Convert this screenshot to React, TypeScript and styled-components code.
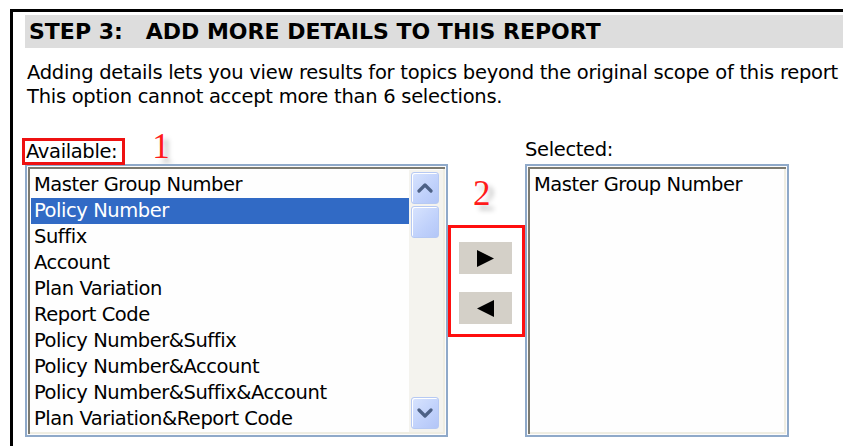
import styled, { createGlobalStyle } from "styled-components";

const GlobalStyle = createGlobalStyle`
  html, body {
    margin: 0;
    padding: 0;
    background: #ffffff;
  }
  body {
    font-family: "DejaVu Sans", "Liberation Sans", sans-serif;
    color: #000000;
    overflow: hidden;
  }
`;

const available = [
  "Master Group Number",
  "Policy Number",
  "Suffix",
  "Account",
  "Plan Variation",
  "Report Code",
  "Policy Number&Suffix",
  "Policy Number&Account",
  "Policy Number&Suffix&Account",
  "Plan Variation&Report Code",
];

const selected = ["Master Group Number"];

const Frame = styled.div`
  margin: 9px 0 0 10px;
  height: 437px;
  border-top: 3px solid #000;
  border-left: 3px solid #000;
  padding: 3px 0 0 12px;
  box-sizing: border-box;
`;

const Header = styled.div`
  height: 33px;
  background: #dddddd;
  padding-left: 4px;
  display: flex;
  align-items: center;
  font-weight: bold;
  font-size: 22px;
  letter-spacing: 0;
  white-space: pre;
`;

const Intro = styled.p`
  margin: 13px 0 0 2px;
  font-size: 19.5px;
  line-height: 24px;
  letter-spacing: -0.27px;
  white-space: nowrap;
`;

const Picker = styled.div`
  display: grid;
  grid-template-columns: 423px 77px 264px;
  margin-top: 23px;
`;

const Column = styled.div`
  display: flex;
  flex-direction: column;
`;

const LabelRow = styled.div`
  height: 32px;
  display: flex;
  align-items: flex-end;
`;

const Label = styled.span<{ $boxed?: boolean }>`
  font-size: 19.5px;
  letter-spacing: -0.35px;
  line-height: 21px;
  box-sizing: border-box;
  ${(p) =>
    p.$boxed
      ? `
    height: 27px;
    border: 3px solid #ee1111;
    padding: 0 5px 0 1px;
    margin: 0 0 -1px -3px;
    position: relative;
    z-index: 1;
  `
      : `
    padding: 0 0 4px 0;
  `}
`;

const Callout = styled.span`
  font-family: "Liberation Serif", "DejaVu Serif", serif;
  font-size: 35px;
  line-height: 1;
  color: #ff1a1a;
  text-shadow: 5px 5px 5px rgba(0, 0, 0, 0.25);
`;

const StepOne = styled(Callout)`
  align-self: flex-start;
  margin: -3px 0 0 27px;
`;

const StepTwo = styled(Callout)`
  margin: 44px 0 0 25px;
  height: 49px;
`;

const ListBox = styled.div`
  height: 273px;
  box-sizing: border-box;
  border: 2px solid #8fa9c9;
  padding: 4px 3px 3px 4px;
  background: #fefefe;
  box-shadow: inset 0 0 0 1px #fcfcfc, inset 3px 3px 0 #7c7a70,
    inset -3px -3px 0 #efede2;
  display: flex;
`;

const Items = styled.ul`
  flex: 1;
  margin: 2px 0 0;
  padding: 0;
  list-style: none;
`;

const Item = styled.li<{ $active?: boolean }>`
  height: 26px;
  line-height: 26px;
  padding-left: 3px;
  font-size: 19.5px;
  letter-spacing: -0.45px;
  white-space: nowrap;
  background: ${(p) => (p.$active ? "#316ac5" : "transparent")};
  color: ${(p) => (p.$active ? "#ffffff" : "#000000")};
`;

const ScrollBar = styled.div`
  width: 34px;
  background: #f4f3ee;
  display: flex;
  flex-direction: column;
  padding: 2px 4px 3px 2px;
  box-sizing: border-box;
  gap: 2px;
`;

const ScrollPart = styled.div`
  height: 32px;
  border: 1px solid #b6c9f3;
  border-radius: 3px;
  background: linear-gradient(135deg, #d8e4fe 0%, #c0d1fb 60%, #b3c6f7 100%);
  box-shadow: inset 1px 1px 0 #ffffff;
  display: flex;
  align-items: center;
  justify-content: center;
  box-sizing: border-box;
`;

const Track = styled.div`
  flex: 1;
`;

const MoveColumn = styled.div`
  display: flex;
  flex-direction: column;
`;

const MoveGroup = styled.div`
  width: 77px;
  height: 112px;
  box-sizing: border-box;
  border: 3px solid #ff0f0f;
  padding: 14px 0 0 8px;
  display: flex;
  flex-direction: column;
  gap: 18px;
  background: #ffffff;
  position: relative;
  z-index: 1;
`;

const MoveButton = styled.button`
  width: 53px;
  height: 32px;
  border: none;
  padding: 0;
  background: #d4d0c8;
  display: flex;
  align-items: center;
  justify-content: center;
`;

const SelectedPad = styled(Items)`
  margin-top: 2px;
`;

const Chevron = ({ up }: { up?: boolean }) => (
  <svg width="16" height="10" viewBox="0 0 16 10">
    <path
      d={up ? "M2 8 L8 2 L14 8" : "M2 2 L8 8 L14 2"}
      fill="none"
      stroke="#4d6185"
      strokeWidth="3.2"
      strokeLinecap="round"
      strokeLinejoin="round"
    />
  </svg>
);

const Arrow = ({ left }: { left?: boolean }) => (
  <svg width="17" height="17" viewBox="0 0 17 17">
    <polygon points={left ? "17,0 17,17 0,8.5" : "0,0 0,17 17,8.5"} fill="#000" />
  </svg>
);

export default function App() {
  return (
    <>
      <GlobalStyle />
      <Frame>
        <Header>STEP 3:   ADD MORE DETAILS TO THIS REPORT</Header>
        <Intro>
          Adding details lets you view results for topics beyond the original scope of this report
          <br />
          This option cannot accept more than 6 selections.
        </Intro>
        <Picker>
          <Column>
            <LabelRow>
              <Label $boxed>Available:</Label>
              <StepOne>1</StepOne>
            </LabelRow>
            <ListBox>
              <Items>
                {available.map((name, i) => (
                  <Item key={name} $active={i === 1}>
                    {name}
                  </Item>
                ))}
              </Items>
              <ScrollBar>
                <ScrollPart>
                  <Chevron up />
                </ScrollPart>
                <ScrollPart />
                <Track />
                <ScrollPart>
                  <Chevron />
                </ScrollPart>
              </ScrollBar>
            </ListBox>
          </Column>
          <MoveColumn>
            <StepTwo>2</StepTwo>
            <MoveGroup>
              <MoveButton>
                <Arrow />
              </MoveButton>
              <MoveButton>
                <Arrow left />
              </MoveButton>
            </MoveGroup>
          </MoveColumn>
          <Column>
            <LabelRow>
              <Label>Selected:</Label>
            </LabelRow>
            <ListBox>
              <SelectedPad>
                {selected.map((name) => (
                  <Item key={name}>{name}</Item>
                ))}
              </SelectedPad>
            </ListBox>
          </Column>
        </Picker>
      </Frame>
    </>
  );
}
